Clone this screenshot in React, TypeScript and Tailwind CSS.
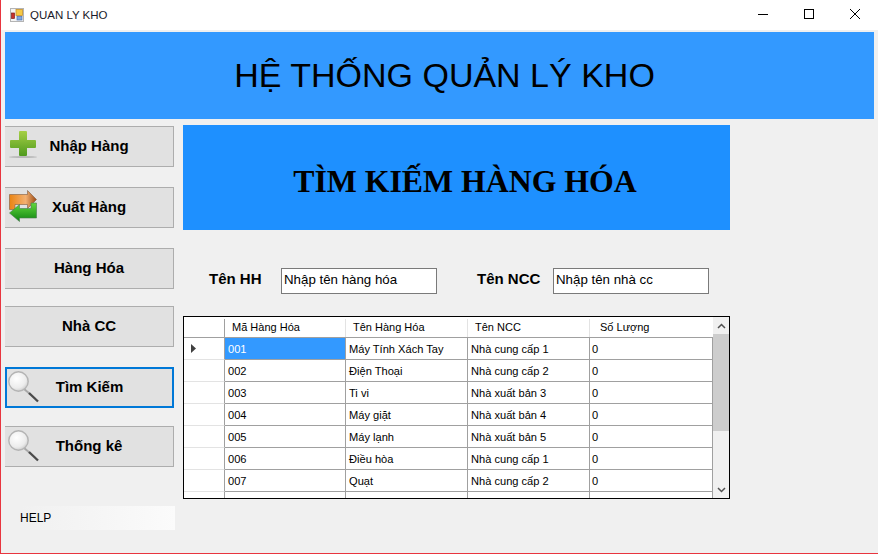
const rows = [
  ['001', 'Máy Tính Xách Tay', 'Nhà cung cấp 1', '0'],
  ['002', 'Điện Thoại', 'Nhà cung cấp 2', '0'],
  ['003', 'Ti vi', 'Nhà xuất bản 3', '0'],
  ['004', 'Máy giặt', 'Nhà xuất bản 4', '0'],
  ['005', 'Máy lạnh', 'Nhà xuất bản 5', '0'],
  ['006', 'Điều hòa', 'Nhà cung cấp 1', '0'],
  ['007', 'Quạt', 'Nhà cung cấp 2', '0'],
  ['', '', '', ''],
];

function AppIcon() {
  return (
    <svg width="14" height="14" viewBox="0 0 14 14" className="shrink-0">
      <rect x="0.5" y="0.5" width="13" height="13" fill="#f4f4f4" stroke="#b4b4b4" />
      <rect x="6" y="1.5" width="6.5" height="6" fill="#f6c945" stroke="#c8922a" strokeWidth="0.8" />
      <rect x="1.5" y="5" width="3" height="5.5" fill="#c9302c" stroke="#7c1f1c" strokeWidth="0.7" />
      <rect x="7" y="8.5" width="5" height="3.5" fill="#7fa8e0" stroke="#4a6fb0" strokeWidth="0.7" />
    </svg>
  );
}

function PlusIcon() {
  return (
    <svg width="30" height="28" viewBox="0 0 30 28">
      <defs>
        <linearGradient id="plusFill" x1="0" y1="0" x2="0" y2="1">
          <stop offset="0" stopColor="#a5cf45" />
          <stop offset="1" stopColor="#4f9a1e" />
        </linearGradient>
      </defs>
      <ellipse cx="14" cy="26" rx="14" ry="1" fill="#b8b8b8" />
      <path
        d="M10 1q0-1 1-1h6q1 0 1 1v8h8q1 0 1 1v6q0 1-1 1h-8v7q0 1-1 1h-6q-1 0-1-1v-7H2q-1 0-1-1v-6q0-1 1-1h8z"
        fill="url(#plusFill)"
      />
    </svg>
  );
}

function SwapIcon() {
  return (
    <svg width="28" height="32" viewBox="0 0 28 32">
      <defs>
        <linearGradient id="swapTop" x1="0" y1="0" x2="1" y2="0">
          <stop offset="0" stopColor="#ea8412" />
          <stop offset="0.6" stopColor="#f3b071" />
          <stop offset="1" stopColor="#9a4a14" />
        </linearGradient>
        <linearGradient id="swapBottom" x1="0" y1="0" x2="0" y2="1">
          <stop offset="0" stopColor="#62d83c" />
          <stop offset="1" stopColor="#0f8412" />
        </linearGradient>
      </defs>
      <path d="M0.5 4.5h18v-4l9 9-9 9v-4H6v5H0.5z" fill="url(#swapTop)" stroke="#7d5a40" strokeWidth="0.6" />
      <path d="M27.5 28h-17v3.5l-10-8.5 10-8.5v4h11.5v-5.5h5.5z" fill="url(#swapBottom)" stroke="#4a7a50" strokeWidth="0.6" />
    </svg>
  );
}

function SearchIcon() {
  return (
    <svg width="31" height="32" viewBox="0 0 31 32">
      <defs>
        <radialGradient id="lens" cx="0.4" cy="0.35" r="0.7">
          <stop offset="0" stopColor="#ffffff" />
          <stop offset="0.7" stopColor="#ececec" />
          <stop offset="1" stopColor="#c8c8c8" />
        </radialGradient>
      </defs>
      <line x1="16" y1="18" x2="22" y2="23" stroke="#a8a8a8" strokeWidth="2" />
      <line x1="21" y1="22" x2="30" y2="30.5" stroke="#4a4a4a" strokeWidth="2.4" />
      <circle cx="10.5" cy="10.5" r="9.7" fill="url(#lens)" stroke="#b4b4b4" strokeWidth="1.4" />
    </svg>
  );
}

function SideButton({
  label,
  icon,
  className,
  focused,
}: {
  label: string;
  icon?: React.ReactNode;
  className: string;
  focused?: boolean;
}) {
  return (
    <button
      className={`relative flex h-[41px] w-[169px] items-center justify-center bg-[#e1e1e1] text-[15px] font-bold text-black ${
        focused ? 'border-2 border-[#0078d7]' : 'border border-l-0 border-[#adadad]'
      } ${className}`}
    >
      {icon}
      <span>{label}</span>
    </button>
  );
}

export default function App() {
  return (
    <div className="relative flex h-[554px] w-[878px] flex-col overflow-hidden border-b border-l border-[#e8353f] bg-[#f0f0f0] font-['Liberation_Sans',sans-serif] text-black">
      <div className="flex h-[30px] shrink-0 items-center bg-white pl-[9px] text-[11.5px] text-[#1a1a2a]">
        <AppIcon />
        <span className="ml-[6px] pt-[1px]">QUAN LY KHO</span>
        <div className="ml-auto flex h-full items-center">
          <svg width="46" height="30" viewBox="0 0 46 30">
            <line x1="18" y1="14.5" x2="28" y2="14.5" stroke="#000" />
          </svg>
          <svg width="46" height="30" viewBox="0 0 46 30">
            <rect x="18.5" y="9.5" width="9" height="9" fill="none" stroke="#000" />
          </svg>
          <svg width="46" height="30" viewBox="0 0 46 30">
            <path d="M18 9l10 10M28 9L18 19" stroke="#000" fill="none" />
          </svg>
        </div>
      </div>

      <div className="ml-[4px] mt-[2px] flex h-[87px] w-[869px] shrink-0 items-center justify-center bg-[#3399ff] pl-[10px] text-[34px]">
        HỆ THỐNG QUẢN LÝ KHO
      </div>

      <div className="ml-[4px] mt-[6px] flex">
        <div className="flex w-[169px] shrink-0 flex-col pt-[1px]">
          <SideButton
            label="Nhập Hàng"
            className=""
            icon={
              <span className="absolute left-[4px] top-[4px]">
                <PlusIcon />
              </span>
            }
          />
          <SideButton
            label="Xuất Hàng"
            className="mt-[20px]"
            icon={
              <span className="absolute left-[4px] top-[2px]">
                <SwapIcon />
              </span>
            }
          />
          <SideButton label="Hàng Hóa" className="mt-[20px]" />
          <SideButton label="Nhà CC" className="mt-[17px]" />
          <SideButton
            label="Tìm Kiếm"
            className="mt-[20px]"
            focused
            icon={
              <span className="absolute left-[1px] top-[2px]">
                <SearchIcon />
              </span>
            }
          />
          <SideButton
            label="Thống kê"
            className="mt-[18px]"
            icon={
              <span className="absolute left-[3px] top-[3px]">
                <SearchIcon />
              </span>
            }
          />
          <div className="ml-[15px] mt-[39px] flex h-[24px] w-[155px] items-center bg-gradient-to-r from-[#f0f0f0] to-[#fbfbfb] text-[12px]">
            HELP
          </div>
        </div>

        <div className="ml-[9px] w-[547px] shrink-0">
          <div className="flex h-[105px] items-center justify-center bg-[#1e90ff] pl-[17px] pt-[8px] font-['Liberation_Serif',serif] text-[31.8px] font-bold">
            TÌM KIẾM HÀNG HÓA
          </div>

          <div className="mt-[38px] flex h-[26px] items-center text-[15px] font-bold">
            <span className="mb-[4px] ml-[26px] w-[72px]">Tên HH</span>
            <div className="flex h-[26px] w-[156px] items-center border border-[#7a7a7a] bg-white pb-[3px] pl-[2px] text-[13.3px] font-normal">
              Nhập tên hàng hóa
            </div>
            <span className="mb-[4px] ml-[40px] w-[76px]">Tên NCC</span>
            <div className="flex h-[26px] w-[156px] items-center border border-[#7a7a7a] bg-white pb-[3px] pl-[2px] text-[13.3px] font-normal">
              Nhập tên nhà cc
            </div>
          </div>

          <div className="mt-[22px] flex h-[183px] border border-black bg-white text-[11.1px]">
            <div className="h-full w-[529px] overflow-hidden">
              <div className="flex h-[21px] border-b border-[#a0a0a0] pt-[2px] text-[11px]">
                <div className="w-[41px] border-r border-[#a0a0a0]" />
                <div className="w-[121px] border-r border-[#e3e3e3] pl-[7px]">Mã Hàng Hóa</div>
                <div className="w-[122px] border-r border-[#e3e3e3] pl-[7px]">Tên Hàng Hóa</div>
                <div className="w-[122px] border-r border-[#e3e3e3] pl-[7px]">Tên NCC</div>
                <div className="flex-1 pl-[10px]">Số Lượng</div>
              </div>
              {rows.map((row, i) => (
                <div key={i} className="flex h-[22px]">
                  <div className="flex w-[41px] items-center border-r border-b border-r-[#a0a0a0] border-b-[#e3e3e3] pl-[7px]">
                    {i === 0 && (
                      <svg width="5" height="9" viewBox="0 0 5 9">
                        <path d="M0 0l5 4.5L0 9z" fill="#404040" />
                      </svg>
                    )}
                  </div>
                  <div
                    className={`flex w-[121px] items-center border-r border-b border-[#a0a0a0] pl-[3px] pt-[1px] ${
                      i === 0 ? 'bg-[#3399ff] text-white' : ''
                    }`}
                  >
                    {row[0]}
                  </div>
                  <div className="flex w-[122px] items-center border-r border-b border-[#a0a0a0] pl-[3px] pt-[1px]">{row[1]}</div>
                  <div className="flex w-[122px] items-center border-r border-b border-[#a0a0a0] pl-[3px] pt-[1px]">{row[2]}</div>
                  <div className="flex flex-1 items-center border-r border-b border-[#a0a0a0] pl-[2px] pt-[1px]">{row[3]}</div>
                </div>
              ))}
            </div>
            <div className="flex h-full w-[16px] flex-col bg-[#f0f0f0]">
              <div className="flex h-[17px] items-center justify-center">
                <svg width="9" height="6" viewBox="0 0 9 6">
                  <path d="M1 5l3.5-3.5L8 5" fill="none" stroke="#505050" strokeWidth="1.5" />
                </svg>
              </div>
              <div className="h-[97px] bg-[#cdcdcd]" />
              <div className="mt-auto flex h-[17px] items-center justify-center">
                <svg width="9" height="6" viewBox="0 0 9 6">
                  <path d="M1 1l3.5 3.5L8 1" fill="none" stroke="#505050" strokeWidth="1.5" />
                </svg>
              </div>
            </div>
          </div>
        </div>
      </div>
    </div>
  );
}
